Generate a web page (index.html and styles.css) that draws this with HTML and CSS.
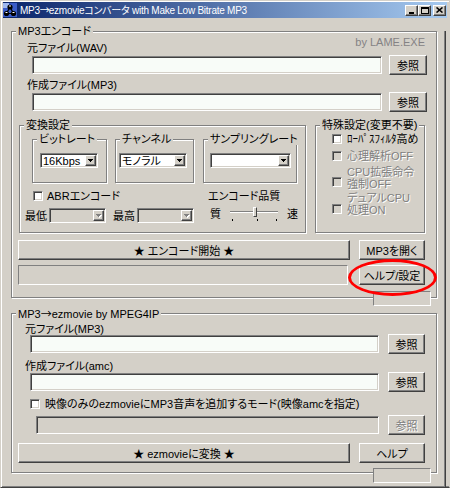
FILE: index.html
```html
<!DOCTYPE html>
<html lang="ja">
<head>
<meta charset="utf-8">
<title>MP3→ezmovieコンバータ</title>
<link rel="stylesheet" href="styles.css">
</head>
<body>
<div class="window">
  <div class="titlebar">
    <svg class="app-icon" viewBox="0 0 14 14" width="14" height="14">
      <rect width="14" height="14" fill="#3a5cc8"/>
      <rect x="0" y="0" width="6" height="5" fill="#9fb8f0"/>
      <path d="M7 4 L3.5 10.5 L10.5 10.5 Z" fill="none" stroke="#000" stroke-width="1.2"/>
      <circle cx="7" cy="4" r="2.6" fill="#000"/>
      <circle cx="3.5" cy="10.5" r="2.6" fill="#000"/>
      <circle cx="10.5" cy="10.5" r="2.6" fill="#000"/>
      <rect x="6" y="2.5" width="2" height="1" fill="#fff"/>
      <rect x="2.5" y="9" width="2" height="1" fill="#fff"/>
      <rect x="9.5" y="9" width="2" height="1" fill="#fff"/>
    </svg>
    <span class="title">MP3<span class="arw">→</span>ezmovieコンバータ with Make Low Bitrate MP3</span>
    <div class="tbtns">
      <span class="tbtn"><svg width="7" height="7" viewBox="0 0 7 7"><rect x="1" y="5" width="5" height="2" fill="#000"/></svg></span>
      <span class="tbtn"><svg width="8" height="7" viewBox="0 0 8 7"><path d="M0 0 H8 V7 H0 Z M1 2 V6 H7 V2 Z" fill="#000" fill-rule="evenodd"/></svg></span>
      <span class="tbtn close"><svg width="7" height="6" viewBox="0 0 7 6"><path d="M0.5 0.5 L6.5 5.5 M6.5 0.5 L0.5 5.5" stroke="#000" stroke-width="1.6"/></svg></span>
    </div>
  </div>

  <div class="client">
    <div class="group g-encode">
      <span class="cap">MP3エンコード</span>
      <div class="row-top">
        <span class="lbl">元ファイル(WAV)</span>
        <span class="by">by LAME.EXE</span>
      </div>
      <div class="file-row enc">
        <span class="field"></span>
        <span class="btn btn-ref">参照</span>
      </div>
      <div class="lbl lbl-gap">作成ファイル(MP3)</div>
      <div class="file-row enc">
        <span class="field"></span>
        <span class="btn btn-ref">参照</span>
      </div>

      <div class="settings">
        <div class="group g-conv">
          <span class="cap">変換設定</span>
          <div class="subgroups">
            <div class="group sg sg-bit">
              <span class="cap">ビットレート</span>
              <div class="combo c-bit"><span class="val">16Kbps</span><span class="drop"><svg width="5" height="3" viewBox="0 0 5 3"><rect x="0" y="0" width="5" height="1"/><rect x="1" y="1" width="3" height="1"/><rect x="2" y="2" width="1" height="1"/></svg></span></div>
            </div>
            <div class="group sg sg-ch">
              <span class="cap">チャンネル</span>
              <div class="combo c-ch"><span class="val">モノラル</span><span class="drop"><svg width="5" height="3" viewBox="0 0 5 3"><rect x="0" y="0" width="5" height="1"/><rect x="1" y="1" width="3" height="1"/><rect x="2" y="2" width="1" height="1"/></svg></span></div>
            </div>
            <div class="group sg sg-sr">
              <span class="cap">サンプリングレート</span>
              <div class="combo c-sr"><span class="val"></span><span class="drop"><svg width="5" height="3" viewBox="0 0 5 3"><rect x="0" y="0" width="5" height="1"/><rect x="1" y="1" width="3" height="1"/><rect x="2" y="2" width="1" height="1"/></svg></span></div>
            </div>
          </div>
          <div class="conv-bottom">
            <div class="conv-left">
              <div class="check abr"><span class="box"></span><span>ABRエンコード</span></div>
              <div class="minmax">
                <span class="mm-lbl">最低</span>
                <div class="combo disabled c-mm"><span class="val"></span><span class="drop"><svg width="6" height="4" viewBox="0 0 6 4"><rect x="1" y="1" width="5" height="1" fill="#fff"/><rect x="2" y="2" width="3" height="1" fill="#fff"/><rect x="3" y="3" width="1" height="1" fill="#fff"/><rect x="0" y="0" width="5" height="1" fill="#808080"/><rect x="1" y="1" width="3" height="1" fill="#808080"/><rect x="2" y="2" width="1" height="1" fill="#808080"/></svg></span></div>
                <span class="mm-lbl mm-2">最高</span>
                <div class="combo disabled c-mm"><span class="val"></span><span class="drop"><svg width="6" height="4" viewBox="0 0 6 4"><rect x="1" y="1" width="5" height="1" fill="#fff"/><rect x="2" y="2" width="3" height="1" fill="#fff"/><rect x="3" y="3" width="1" height="1" fill="#fff"/><rect x="0" y="0" width="5" height="1" fill="#808080"/><rect x="1" y="1" width="3" height="1" fill="#808080"/><rect x="2" y="2" width="1" height="1" fill="#808080"/></svg></span></div>
              </div>
            </div>
            <div class="conv-right">
              <div class="q-title">エンコード品質</div>
              <div class="quality">
                <span class="q-lbl">質</span>
                <div class="slider">
                  <span class="track"></span>
                  <span class="thumb"></span>
                  <span class="tick t1"></span>
                  <span class="tick t2"></span>
                  <span class="tick t3"></span>
                </div>
                <span class="q-fast">速</span>
              </div>
            </div>
          </div>
        </div>

        <div class="group g-special">
          <span class="cap">特殊設定(変更不要)</span>
          <div class="sp-row"><span class="box"></span><span>ﾛｰﾊﾟｽﾌｨﾙﾀ高め</span></div>
          <div class="sp-row r2 dis"><span class="box off"></span><span>心理解析OFF</span></div>
          <div class="sp-row r3 dis multi"><span class="box off"></span><span>CPU拡張命令<br>強制OFF</span></div>
          <div class="sp-row r4 dis multi"><span class="box off"></span><span>デュアルCPU<br>処理ON</span></div>
        </div>
      </div>

      <div class="action-row">
        <span class="btn btn-wide">★ エンコード開始 ★</span>
        <span class="btn btn-side">MP3を開く</span>
      </div>
      <div class="action-row a2">
        <span class="progress"></span>
        <span class="btn btn-side">ヘルプ/設定</span>
      </div>
    </div>
    <div class="status-row s1"><span class="status"></span></div>

    <div class="group g-ez">
      <span class="cap">MP3<span class="arw">→</span>ezmovie by MPEG4IP</span>
      <div class="lbl">元ファイル(MP3)</div>
      <div class="file-row ez first">
        <span class="field"></span>
        <span class="btn btn-ref">参照</span>
      </div>
      <div class="lbl lbl-gap2">作成ファイル(amc)</div>
      <div class="file-row ez">
        <span class="field"></span>
        <span class="btn btn-ref">参照</span>
      </div>
      <div class="check ez-check"><span class="box"></span><span>映像のみのezmovieにMP3音声を追加するモード(映像amcを指定)</span></div>
      <div class="file-row ez dis-row">
        <span class="field field-dis"></span>
        <span class="btn btn-ref dis">参照</span>
      </div>
      <div class="action-row a3">
        <span class="btn btn-wide">★ ezmovieに変換 ★</span>
        <span class="btn btn-side">ヘルプ</span>
      </div>
    </div>
    <div class="status-row s2"><span class="status"></span></div>
  </div>

  <div class="annotation"></div>
</div>
</body>
</html>
```

FILE: styles.css
```css
* { box-sizing: border-box; }
html, body { margin: 0; padding: 0; }
body {
  background: #D4D0C8;
  font-family: "Liberation Sans", "Noto Sans CJK JP", sans-serif;
  font-size: 11px;
  color: #000;
  font-feature-settings: "palt";
}
.arw { font-family: "Noto Sans CJK JP", sans-serif; font-feature-settings: normal; }

.window {
  position: relative;
  width: 450px;
  height: 488px;
  background: #D4D0C8;
  border: 1px solid;
  border-color: #D4D0C8 #D4D0C8 #404040 #D4D0C8;
  box-shadow: inset 1px 1px #fff, inset 0 -1px #808080;
  padding: 1px 2px 1px 2px;
  overflow: hidden;
}

/* title bar */
.titlebar {
  height: 16px;
  display: flex;
  align-items: center;
  background: linear-gradient(to right, #0A246A, #A6CAF0);
  color: #fff;
}
.app-icon { flex: none; margin-right: 3px; }
.title { flex: 1; white-space: nowrap; line-height: 14px; font-size: 10px; letter-spacing: -0.25px; }
.title .arw { letter-spacing: -1px; }
.tbtns { display: flex; align-items: center; margin-right: 1px; }
.tbtn {
  width: 13px;
  height: 11px;
  background: #D4D0C8;
  border: 1px solid;
  border-color: #fff #404040 #404040 #fff;
  box-shadow: inset -1px -1px #808080;
  display: flex;
  align-items: center;
  justify-content: center;
}
.tbtn svg { display: block; }
.tbtn.close { margin-left: 2px; }

.client {
  height: 468px;
  margin-right: 1px;
  padding-left: 8px;
  border-right: 1px solid #404040;
  box-shadow: inset -1px 0 #808080;
}

/* group boxes */
.group {
  position: relative;
  border: 1px solid #808080;
  box-shadow: 1px 1px 0 #fff, inset 1px 1px 0 #fff;
}
.cap {
  position: absolute;
  top: -7px;
  left: 4px;
  padding: 0 2px;
  line-height: 12px;
  background: #D4D0C8;
  white-space: nowrap;
}

.lbl { line-height: 12px; white-space: nowrap; }

/* controls */
.btn {
  display: flex;
  align-items: center;
  justify-content: center;
  background: #D4D0C8;
  border: 1px solid;
  border-color: #fff #404040 #404040 #fff;
  box-shadow: inset -1px -1px #808080;
  white-space: nowrap;
  height: 20px;
}
.field {
  display: block;
  height: 18px;
  background: #F8FCF8;
  border: 1px solid;
  border-color: #808080 #fff #fff #808080;
  box-shadow: inset 1px 1px #404040, inset -1px -1px #D4D0C8;
}
.field-dis { background: #D4D0C8; }
.dis { color: #808080; text-shadow: 1px 1px 0 #fff; }

.box {
  flex: none;
  width: 10px;
  height: 10px;
  background: #fff;
  border: 1px solid;
  border-color: #808080 #fff #fff #808080;
  box-shadow: inset 1px 1px #404040, inset -1px -1px #D4D0C8;
}
.box.off { background: #D4D0C8; }

.combo {
  display: flex;
  align-items: center;
  height: 15px;
  background: #fff;
  border: 1px solid;
  border-color: #808080 #fff #fff #808080;
  box-shadow: inset 1px 1px #404040, inset -1px -1px #D4D0C8;
  padding: 0 1px 0 2px;
}
.combo.disabled { background: #D4D0C8; }
.combo .val { flex: 1; line-height: 12px; white-space: nowrap; }
.drop {
  width: 11px;
  height: 11px;
  background: #D4D0C8;
  border: 1px solid;
  border-color: #fff #404040 #404040 #fff;
  box-shadow: inset -1px -1px #808080;
  display: flex;
  align-items: center;
  justify-content: center;
}
.drop svg { display: block; }

.progress, .status {
  display: block;
  background: #D4D0C8;
  border: 1px solid;
  border-color: #808080 #fff #fff #808080;
}

/* encode group */
.g-encode {
  margin-top: 13px;
  width: 426px;
  height: 267px;
  padding: 4px 9px 0 6px;
}
.row-top {
  display: flex;
  justify-content: space-between;
  height: 18px;
  margin: 0 2px 0 9px;
}
.row-top .lbl { align-self: flex-end; }
.by { align-self: flex-start; line-height: 12px; color: #848284; }

.file-row { display: flex; align-items: center; height: 20px; }
.file-row.enc { margin: 1px 0 0 14px; gap: 7px; }
.file-row.enc .field { width: 350px; }
.file-row.enc .btn-ref { width: 38px; }
.lbl-gap { margin: 4px 0 0 9px; }

.settings { display: flex; margin: 13px 0 0 1px; gap: 9px; }

.g-conv { width: 287px; height: 108px; padding: 13px 0 0 12px; }
.subgroups { display: flex; gap: 8px; }
.sg { height: 44px; padding-top: 13px; }
.sg-bit { width: 75px; padding-left: 7px; }
.sg-ch { width: 79px; padding-left: 3px; }
.sg-sr { width: 94px; padding-left: 6px; margin-left: 1px; }
.c-bit { width: 58px; }
.c-ch { width: 68px; }
.c-sr { width: 81px; }

.conv-bottom { display: flex; margin: 7px 0 0 -12px; }
.conv-left { width: 188px; }
.check { display: flex; align-items: center; line-height: 12px; white-space: nowrap; }
.abr { gap: 4px; margin-left: 13px; }
.minmax { display: flex; align-items: center; height: 15px; margin-top: 6px; margin-left: 5px; }
.mm-lbl { width: 24px; line-height: 12px; }
.mm-2 { margin-left: 7px; }
.c-mm { width: 57px; }

.conv-right { width: 90px; }
.q-title { line-height: 12px; white-space: nowrap; }
.quality { display: flex; align-items: center; height: 16px; margin-top: 4px; }
.q-lbl { width: 20px; margin-left: 2px; line-height: 12px; }
.q-fast { margin-left: 9px; line-height: 12px; }
.slider { position: relative; width: 48px; height: 16px; }
.track {
  position: absolute; left: 0; right: 0; top: 5px; height: 2px;
  border-top: 1px solid #808080; border-bottom: 1px solid #fff;
}
.thumb {
  position: absolute; left: 23px; top: 1px; width: 4px; height: 10px;
  background: #D4D0C8;
  border-left: 1px solid #fff; border-top: 1px solid #fff;
  border-right: 1px solid #404040; border-bottom: 1px solid #404040;
}
.tick { position: absolute; top: 13px; width: 1px; height: 2px; background: #000; }
.t1 { left: 2px; }
.t2 { left: 27px; }
.t3 { left: 46px; }

.g-special { width: 110px; height: 108px; padding: 7px 0 0 16px; }
.sp-row { display: flex; align-items: center; gap: 5px; line-height: 12px; white-space: nowrap; }
.sp-row.r2 { margin-top: 5px; }
.sp-row.r3 { margin-top: 4px; }
.sp-row.r4 { margin-top: 2px; }
.sp-row.multi { align-items: flex-start; }
.sp-row.r3 .box { margin-top: 11px; }
.sp-row.r4 .box { margin-top: 12px; }

.action-row { display: flex; gap: 9px; height: 20px; margin-top: 7px; }
.action-row.a2 { margin-top: 5px; }
.btn-wide { width: 332px; }
.btn-side { width: 66px; }
.progress { width: 330px; height: 20px; margin-right: 2px; }

.status-row { position: relative; height: 15px; padding-left: 362px; }
.status { width: 58px; height: 15px; }
.status-row.s1 { margin-top: -7px; }
.status-row.s2 { margin-top: -5px; }

/* ezmovie group */
.g-ez {
  margin-top: 7px;
  width: 426px;
  height: 160px;
  padding: 9px 11px 0 6px;
}
.g-ez > .lbl { margin-left: 7px; }
.g-ez > .lbl-gap2 { margin-top: 6px; }
.file-row.ez { margin-left: 12px; gap: 9px; }
.file-row.ez.first { margin-top: -1px; }
.file-row.ez .field { width: 349px; }
.file-row.ez .btn-ref { width: 37px; }
.ez-check { gap: 5px; margin: 6px 0 0 12px; }
.file-row.ez.dis-row { margin: 5px 0 0 18px; }
.file-row.ez .field-dis { width: 343px; }
.action-row.a3 { margin-top: 8px; }

/* red annotation ellipse */
.annotation {
  position: absolute;
  left: 347px;
  top: 258px;
  width: 89px;
  height: 37px;
  border: 3px solid #f00;
  border-radius: 50%;
}
```
